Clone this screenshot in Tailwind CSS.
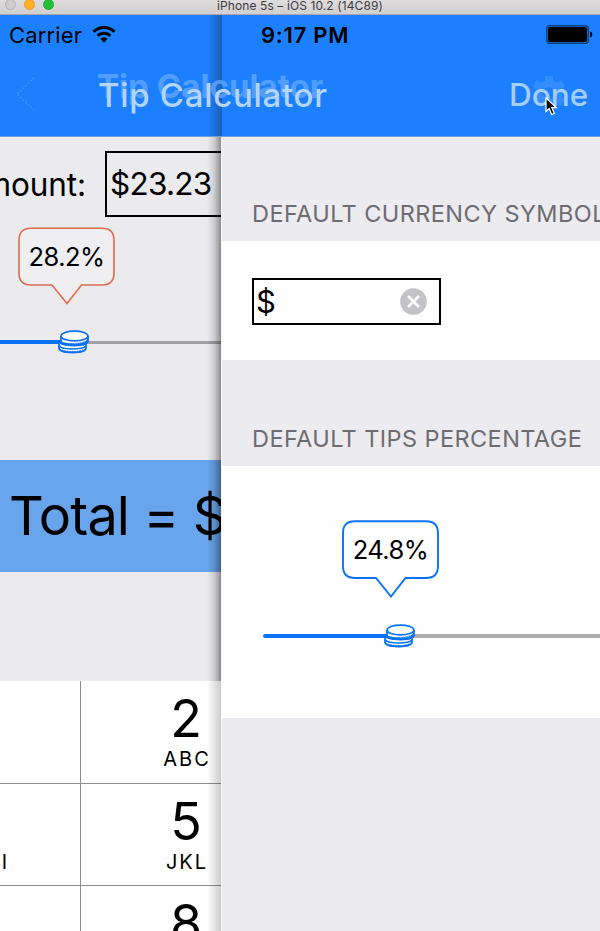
<!DOCTYPE html>
<html lang="en">
<head>
<meta charset="utf-8">
<title>Tip Calculator</title>
<script src="https://cdn.jsdelivr.net/npm/@tailwindcss/browser@4"></script>
</head>
<body class="w-[600px] h-[931px] overflow-hidden bg-[#ecebef] text-black font-[Inter,'Liberation_Sans',sans-serif]">
<svg class="hidden">
  <symbol id="coins" viewBox="0 0 32 24">
    <path d="M1 14v4c0 6 27 6 27 0v-4" fill="#fff" stroke="#0a72f5" stroke-width="1.8"/>
    <path d="M1.500 16c3 4 23 4 26.500 0" fill="none" stroke="#0a72f5" stroke-width="1.600"/>
    <path d="M4 20.300c5 2.200 16 2.200 21 0" fill="none" stroke="#0a72f5" stroke-width="1.800" stroke-dasharray="1.500 1"/>
    <path d="M3 6v5c0 6 27 6 27 0V6" fill="#fff" stroke="#0a72f5" stroke-width="1.800"/>
    <path d="M1 10.500c6 4 24 4 29-1.500v3c-3 4.500-24 5-29 1.500z" fill="#0a72f5"/>
    <ellipse cx="16.500" cy="6" rx="13.400" ry="4.900" fill="#fff" stroke="#0a72f5" stroke-width="1.700"/>
    <path d="M16 13.300q6 0 11-2" fill="none" stroke="#8dbdf5" stroke-width="1.200" stroke-dasharray="1.400 1"/>
  </symbol>
</svg>
<div class="flex flex-col h-[931px]">
  <div class="relative h-[15px] shrink-0 bg-linear-to-b from-[#dedcdd] to-[#d1cfd0] border-b border-[#a9a7a8] flex items-start justify-center">
    <div class="absolute left-[5px] top-[-1px] flex gap-[8px]">
      <span class="size-[11px] rounded-full bg-[#cfcdce] border border-[#b2b0b1]"></span>
      <span class="size-[11px] rounded-full bg-[#fdb127] border border-[#e79d27]"></span>
      <span class="size-[11px] rounded-full bg-[#24c138] border border-[#20ad32]"></span>
    </div>
    <span class="text-[12px] leading-[11px] text-[#3d3b3c] whitespace-pre tracking-[0.100px]">iPhone 5s – iOS 10.2 (14C89)</span>
  </div>

  <header class="relative h-[122px] shrink-0 bg-[#1c80fe] border-b border-[#6f9fd8]">
    <div class="absolute left-[208px] top-0 w-[14px] h-[121px] bg-linear-to-r from-[#1b5fb5]/0 to-[#1b5fb5]"></div>
    <div class="relative h-[40px] flex items-center">
      <span class="ml-[9px] w-[73px] text-[22px] leading-[39px] tracking-[0.150px] whitespace-nowrap">Carrier</span>
      <svg class="ml-[10px] w-[24px] h-[18px] -mt-[2px]" viewBox="0 0 24 18" fill="none" stroke="#000" stroke-width="3"><path d="M1.500 6.700a15 15 0 0 1 21 0"/><path d="M5.600 10.800a9 9 0 0 1 12.800 0"/><path d="M12 17.500l-3.700-3.700a5.200 5.200 0 0 1 7.400 0z" fill="#000" stroke="none"/></svg>
      <span class="ml-[145px] w-[88px] text-[22px] leading-[39px] font-semibold tracking-[0.750px] whitespace-nowrap">9:17 PM</span>
      <svg class="ml-[197px] w-[47px] h-[19px] -mt-[1px]" viewBox="0 0 47 19"><rect x=".75" y=".75" width="41.500" height="17.500" rx="3" fill="none" stroke="#0d3c78" stroke-width="1.500"/><rect x="2" y="2" width="39" height="15" rx="2"/><path d="M44 6.500c3 .5 3 5.500 0 6z"/></svg>
    </div>
    <div class="relative h-[81px] flex items-center">
      <svg class="ml-[15px] w-[20px] h-[34px] -mt-[3px]" viewBox="0 0 20 34" fill="none" stroke="#449aff" stroke-width="1.200" stroke-dasharray="1.500 2"><path d="M19 1L2 17l17 16"/></svg>
      <span class="relative ml-[62px] w-[400px] text-[33px] leading-[76px] -mt-[2px] whitespace-nowrap text-[#b3d5ff]">
        <span aria-hidden="true" class="absolute left-0 top-[-9px] font-bold text-[#65a9ff]/75 tracking-[0.050px]">Tip Calculator</span>
        <span class="relative ml-[1px] font-medium tracking-[0.700px]">Tip Calculator</span>
      </span>
      <span class="relative ml-[12px] text-[31.500px] leading-[76px] -mt-[2px] font-medium text-[#a5ceff]">
        <svg class="absolute left-[22px] top-[18px] size-[36px]" viewBox="0 0 36 36" fill="#4797ff"><path fill-rule="evenodd" d="M14 1h8v5l4 2 4-3 4 6-3 4v6l3 4-4 6-5-3-3 2v5h-8v-5l-4-2-4 3-4-6 3-4v-6l-3-4 4-6 4 3 4-2zM18 12a6 6 0 1 0 0 12a6 6 0 0 0 0-12z" opacity=".55"/></svg>
        <span class="relative">Done</span>
      </span>
    </div>
    <svg class="absolute z-20 left-[545px] top-[82px] w-[13px] h-[19px]" viewBox="0 0 13 19"><path d="M1 1v13.500l3.200-3 2.500 6 2.600-1.100-2.500-5.800h4.500z" fill="#000" stroke="#fff" stroke-width="1.200"/></svg>
  </header>

  <div class="flex h-[794px] shrink-0">
    <main class="relative w-[221px] shrink-0 overflow-hidden bg-[#ebeaec]">
      <div class="mt-[14px] h-[66px] flex">
        <div class="w-[105px] flex justify-end shrink-0 text-[31.500px] leading-[67px] tracking-[-0.100px] pr-[19px] whitespace-nowrap">Amount:</div>
        <div class="w-[190px] shrink-0 border-2 border-black pl-[3px] text-[31.500px] leading-[61px] tracking-[-0.750px]">$23.23</div>
      </div>
      <div class="relative mt-[10px] ml-[18px] w-[97px] h-[78px]">
        <svg class="absolute inset-0 w-[97px] h-[78px]" viewBox="0 0 97 78"><path d="M13 1.200H84Q96 1.200 96 13.200V46Q96 58 84 58H63.500L49 76.500 34 58H13Q1 58 1 46V13.200Q1 1.200 13 1.200z" fill="#efeef0" stroke="#e06a50" stroke-width="1.600"/></svg>
        <div class="relative text-center text-[25.500px] leading-[60px] tracking-[-0.550px]">28.2%</div>
      </div>
      <div class="relative mt-[25px] h-[24px] flex items-center">
        <div class="w-[62px] h-[4px] bg-[#0a72f5]"></div><div class="grow h-[3px] bg-[#a1a0a2]"></div>
        <svg class="absolute left-[58px] top-0 w-[32px] h-[24px]"><use href="#coins"/></svg>
      </div>
      <div class="mt-[106px] h-[112px] bg-[#68a5ec] pl-[9px] text-[54px] leading-[112px] tracking-[-0.850px] whitespace-nowrap">Total = $</div>
      <div class="mt-[109px] h-[260px] grid grid-cols-[81px_210px] grid-rows-[103px_102px_102px] bg-white">
        <div class="border-r border-b border-[#8e8e90]"></div>
        <div class="border-b border-[#8e8e90] flex flex-col items-center pt-[11px]"><span class="text-[52px] leading-[54px]">2</span><span class="text-[20px] leading-[26px] tracking-[2px] ml-[2px]">ABC</span></div>
        <div class="relative border-r border-b border-[#8e8e90]"><span class="absolute right-[78px] top-[10px] text-[51.500px] leading-[54px]">4</span><span class="absolute right-[71px] top-[65px] text-[20px] leading-[26px] tracking-[2px]">GHI</span></div>
        <div class="border-b border-[#8e8e90] flex flex-col items-center pt-[11px]"><span class="text-[52px] leading-[54px]">5</span><span class="text-[20px] leading-[26px] tracking-[2px] ml-[2px]">JKL</span></div>
        <div class="border-r border-[#8e8e90]"></div>
        <div class="flex flex-col items-center pt-[11px]"><span class="text-[52px] leading-[54px]">8</span></div>
      </div>
      <div class="absolute right-0 top-0 w-[14px] h-[544px] bg-linear-to-r from-black/0 via-black/12 to-black/40"></div>
      <div class="absolute right-0 bottom-0 w-[14px] h-[250px] bg-linear-to-r from-black/0 to-black/20"></div>
    </main>

    <section class="w-[379px] overflow-hidden bg-[#ecebf0] border-l border-[#f8f8fa] whitespace-nowrap">
      <h2 class="h-[104px] pt-[62px] pl-[30px] text-[23.500px] leading-[30px] tracking-[0.420px] text-[#6d6c71]">DEFAULT CURRENCY SYMBOL</h2>
      <div class="h-[119px] bg-[#fefefe] pt-[37px] pl-[30px]">
        <div class="w-[189px] h-[47px] border-2 border-black flex items-center justify-between pl-[2px] pr-[12px]">
          <span class="text-[31px] leading-[43px]">$</span>
          <svg class="size-[27px]" viewBox="0 0 27 27"><circle cx="13.500" cy="13.500" r="13.300" fill="#c3c3c6"/><path d="M8 8l11 11M19 8L8 19" stroke="#fff" stroke-width="2.600"/></svg>
        </div>
      </div>
      <h2 class="h-[106px] pt-[64px] pl-[30px] text-[23.500px] leading-[30px] tracking-[0.420px] text-[#6d6c71]">DEFAULT TIPS PERCENTAGE</h2>
      <div class="h-[252px] bg-[#fefefe] pt-[54px]">
        <div class="relative ml-[120px] w-[97px] h-[78px]">
          <svg class="absolute inset-0 w-[97px] h-[78px]" viewBox="0 0 97 78"><path d="M13 1.200H84Q96 1.200 96 13.200V46Q96 58 84 58H63.500L49 76.500 34 58H13Q1 58 1 46V13.200Q1 1.200 13 1.200z" fill="#fff" stroke="#0a72f5" stroke-width="1.900"/></svg>
          <div class="relative text-center text-[25.500px] leading-[60px] tracking-[-0.550px]">24.8%</div>
        </div>
        <div class="relative mt-[26px] ml-[41px] h-[24px] flex items-center">
          <div class="w-[125px] h-[4px] rounded-l-full bg-[#0a72f5]"></div><div class="grow h-[4px] bg-[#aeaeae]"></div>
          <svg class="absolute left-[121px] top-0 w-[32px] h-[24px]"><use href="#coins"/></svg>
        </div>
      </div>
    </section>
  </div>
</div>
</body>
</html>
